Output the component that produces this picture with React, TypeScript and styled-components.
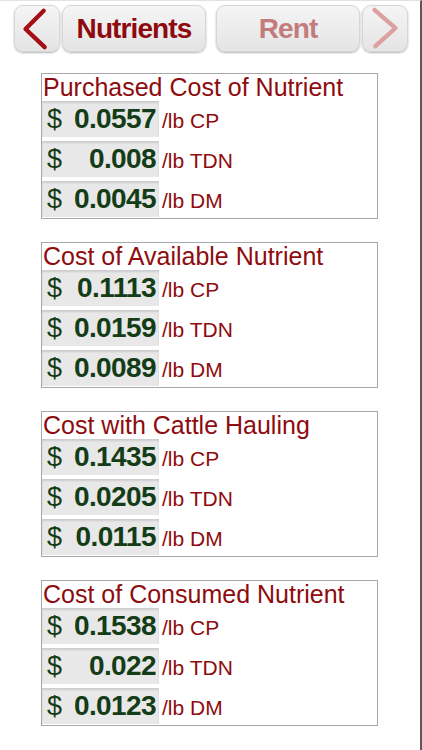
import React from 'react';
import styled, { createGlobalStyle } from 'styled-components';

const GlobalStyle = createGlobalStyle`
  html, body {
    margin: 0;
    padding: 0;
    background: #ffffff;
  }
  body {
    font-family: "Liberation Sans", Arial, Helvetica, sans-serif;
  }
`;

type Row = { value: string; unit: string };
type Section = { title: string; rows: Row[] };

const sections: Section[] = [
  {
    title: 'Purchased Cost of Nutrient',
    rows: [
      { value: '0.0557', unit: '/lb CP' },
      { value: '0.008', unit: '/lb TDN' },
      { value: '0.0045', unit: '/lb DM' },
    ],
  },
  {
    title: 'Cost of Available Nutrient',
    rows: [
      { value: '0.1113', unit: '/lb CP' },
      { value: '0.0159', unit: '/lb TDN' },
      { value: '0.0089', unit: '/lb DM' },
    ],
  },
  {
    title: 'Cost with Cattle Hauling',
    rows: [
      { value: '0.1435', unit: '/lb CP' },
      { value: '0.0205', unit: '/lb TDN' },
      { value: '0.0115', unit: '/lb DM' },
    ],
  },
  {
    title: 'Cost of Consumed Nutrient',
    rows: [
      { value: '0.1538', unit: '/lb CP' },
      { value: '0.022', unit: '/lb TDN' },
      { value: '0.0123', unit: '/lb DM' },
    ],
  },
];

function Chevron({ dir, color }: { dir: 'left' | 'right'; color: string }) {
  const points = dir === 'left' ? '30,5 11,24 31,43' : '12,4 34,23 13,42';
  return (
    <svg width="46" height="47" viewBox="0 0 46 47">
      <polyline
        points={points}
        fill="none"
        stroke={color}
        strokeWidth="4.5"
        strokeLinecap="round"
        strokeLinejoin="round"
      />
    </svg>
  );
}

export default function App() {
  return (
    <>
      <GlobalStyle />
      <Page>
        <NavBar>
          <ArrowButton>
            <Chevron dir="left" color="#a30f12" />
          </ArrowButton>
          <TabButton>Nutrients</TabButton>
          <TabButton $faded $spaced>
            Rent
          </TabButton>
          <ArrowButton>
            <Chevron dir="right" color="#dca0a0" />
          </ArrowButton>
        </NavBar>

        <Cards>
          {sections.map((s) => (
            <Card key={s.title}>
              <CardTitle>{s.title}</CardTitle>
              <Rows>
                {s.rows.map((r) => (
                  <ValueRow key={r.unit}>
                    <ValueBox>
                      <Dollar>$</Dollar>
                      <Amount>{r.value}</Amount>
                    </ValueBox>
                    <Unit>{r.unit}</Unit>
                  </ValueRow>
                ))}
              </Rows>
            </Card>
          ))}
        </Cards>
      </Page>
    </>
  );
}

const Page = styled.div`
  width: 422px;
  min-height: 750px;
  box-sizing: border-box;
  border-top: 1px solid #e2e2e2;
  border-right: 2px solid #5a5a5a;
  padding-top: 4px;
`;

const NavBar = styled.div`
  display: flex;
  align-items: center;
  gap: 2px;
  padding-left: 14px;
`;

const ButtonBase = styled.div`
  height: 47px;
  box-sizing: border-box;
  display: flex;
  align-items: center;
  justify-content: center;
  border-radius: 9px;
  background: linear-gradient(#f5f5f5, #e4e4e4);
  border: 1px solid #d6d6d6;
  box-shadow: 0 1px 2px rgba(0, 0, 0, 0.3);
`;

const ArrowButton = styled(ButtonBase)`
  width: 46px;
`;

const TabButton = styled(ButtonBase)<{ $faded?: boolean; $spaced?: boolean }>`
  width: 144px;
  margin-left: ${(p) => (p.$spaced ? '8px' : '0')};
  font-size: 28px;
  font-weight: bold;
  letter-spacing: -0.9px;
  color: ${(p) => (p.$faded ? '#c27c7c' : '#8e0a0e')};
`;

const Cards = styled.div`
  display: flex;
  flex-direction: column;
  gap: 23px;
  margin: 21px 0 0 41px;
  width: 337px;
`;

const Card = styled.div`
  height: 146px;
  box-sizing: border-box;
  border: 1px solid #a8a8a8;
  display: flex;
  flex-direction: column;
`;

const CardTitle = styled.div`
  height: 27px;
  line-height: 27px;
  padding-left: 1px;
  font-size: 25px;
  color: #8e0b0e;
  white-space: nowrap;
`;

const Rows = styled.div`
  display: flex;
  flex-direction: column;
  gap: 4px;
`;

const ValueRow = styled.div`
  display: flex;
  align-items: baseline;
  height: 36px;
`;

const ValueBox = styled.div`
  width: 117px;
  height: 36px;
  line-height: 36px;
  box-sizing: border-box;
  display: flex;
  align-items: baseline;
  justify-content: space-between;
  padding: 0 3px 0 5px;
  background: #e8e8e8;
  box-shadow: inset 0 2px 2px rgba(0, 0, 0, 0.12);
  color: #133c17;
`;

const Dollar = styled.span`
  font-size: 27px;
`;

const Amount = styled.span`
  font-size: 28px;
  font-weight: bold;
  letter-spacing: -0.6px;
`;

const Unit = styled.span`
  margin-left: 3px;
  font-size: 21px;
  color: #8e0b0e;
`;
